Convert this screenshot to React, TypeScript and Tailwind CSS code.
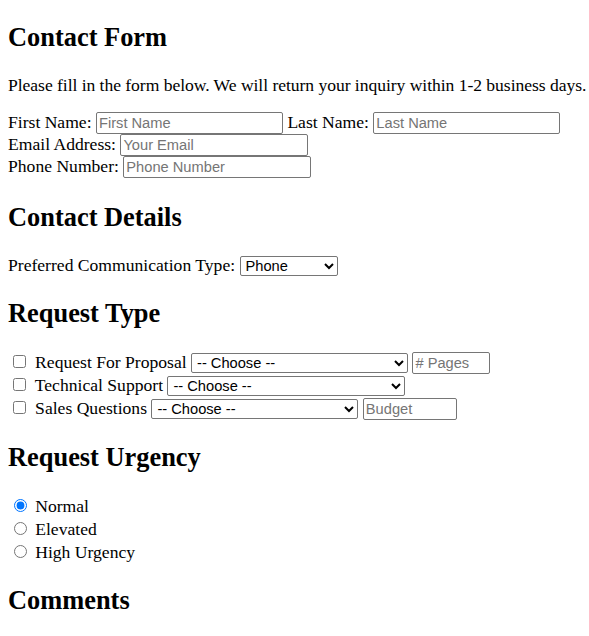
import React from 'react';

// page is shown at 110% zoom, so every default size is scaled by 1.1
const inputCls =
  "h-[22px] border border-[#767676] rounded-[2px] px-[2px] py-[1px] align-baseline text-[14.67px] leading-[normal] font-['Liberation_Sans',Arial,sans-serif] text-black placeholder:text-[#757575] bg-white";
const selectCls =
  "h-[20px] border border-[#767676] rounded-[2px] pl-[1px] text-[14.67px] leading-[normal] font-['Liberation_Sans',Arial,sans-serif] text-black bg-white align-baseline";
const h2Cls = 'my-[22px] text-[26.4px] font-bold leading-[normal]';
const checkCls = 'ml-[4.7px] mr-[5px] my-[3.3px] w-[13px] h-[13px]';
const radioCls = 'ml-[5.5px] mr-[4.3px] mt-[3.3px] w-[13px] h-[13px]';

const App = () => {
  return (
    <div className="px-[8px] pt-px font-['Liberation_Serif','Times_New_Roman',serif] text-[17.6px] leading-[normal] text-black bg-white min-h-screen overflow-hidden">
      <h2 className={h2Cls + ' mt-[21px]'}>Contact Form</h2>
      <p className="mt-[17.6px] mb-[15.6px] whitespace-nowrap tracking-[-0.05px]">
        Please fill in the form below. We will return your inquiry within 1-2 business days.
      </p>

      <form>
        <div className="mb-[24px]">
          <label>First Name: </label>
          <input type="text" placeholder="First Name" className={`${inputCls} w-[187px]`} />{' '}
          <label>Last Name: </label>
          <input type="text" placeholder="Last Name" className={`${inputCls} w-[187px]`} />
          <br />
          <label>Email Address: </label>
          <input type="email" placeholder="Your Email" className={`${inputCls} w-[188px]`} />
          <br />
          <label>Phone Number: </label>
          <input type="tel" placeholder="Phone Number" className={`${inputCls} w-[188px]`} />
        </div>

        <h2 className={h2Cls}>Contact Details</h2>
        <div>
          <label>Preferred Communication Type: </label>
          <select className={`${selectCls} w-[98px]`} defaultValue="Phone">
            <option>Phone</option>
            <option>Email</option>
          </select>
        </div>

        <h2 className={h2Cls}>Request Type</h2>
        <div className="pt-[1px]">
          <div className="h-[23px] whitespace-nowrap">
            <input type="checkbox" className={checkCls} />{' '}
            <label>Request For Proposal</label>{' '}
            <select className={`${selectCls} w-[217px]`} defaultValue="">
              <option value="">-- Choose --</option>
            </select>{' '}
            <input type="number" placeholder="# Pages" className={`${inputCls} w-[78px] h-[21px]`} />
          </div>
          <div className="h-[23px] whitespace-nowrap">
            <input type="checkbox" className={checkCls} />{' '}
            <label>Technical Support</label>{' '}
            <select className={`${selectCls} w-[238px]`} defaultValue="">
              <option value="">-- Choose --</option>
            </select>
          </div>
          <div className="h-[22px] whitespace-nowrap">
            <input type="checkbox" className={checkCls} />{' '}
            <label>Sales Questions</label>{' '}
            <select className={`${selectCls} w-[207px]`} defaultValue="">
              <option value="">-- Choose --</option>
            </select>{' '}
            <input type="text" placeholder="Budget" className={`${inputCls} w-[94px] h-[21px]`} />
          </div>
        </div>

        <h2 className={h2Cls}>Request Urgency</h2>
        <div className="pt-[1px]">
          <div className="h-[23px]">
            <input type="radio" name="urgency" defaultChecked className={radioCls} />{' '}
            <label>Normal</label>
          </div>
          <div className="h-[23px]">
            <input type="radio" name="urgency" className={radioCls} />{' '}
            <label>Elevated</label>
          </div>
          <div className="h-[21px]">
            <input type="radio" name="urgency" className={radioCls} />{' '}
            <label>High Urgency</label>
          </div>
        </div>

        <h2 className={h2Cls}>Comments</h2>
      </form>
    </div>
  );
};

export default App;
